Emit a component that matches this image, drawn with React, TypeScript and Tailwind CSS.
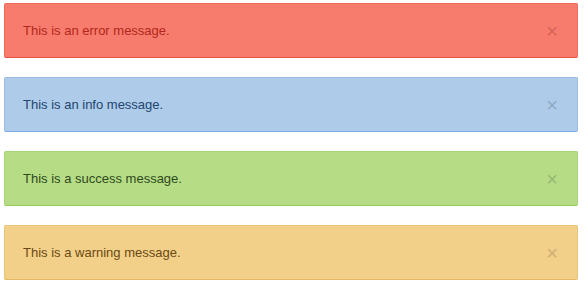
import React from 'react';

type Kind = 'error' | 'info' | 'success' | 'warning';

const styles: Record<Kind, { box: string; text: string; close: string }> = {
  error: {
    box: 'bg-[#f77c6d] border-[#ee6a5b] border-b-[#e9503f]',
    text: 'text-[#b2281b]',
    close: 'text-[#d7645a]',
  },
  info: {
    box: 'bg-[#aecbea] border-[#9bbde3] border-b-[#7eaade]',
    text: 'text-[#23466e]',
    close: 'text-[#8fa9c4]',
  },
  success: {
    box: 'bg-[#b6dd86] border-[#a6d477] border-b-[#93c95f]',
    text: 'text-[#2f4a1c]',
    close: 'text-[#97b872]',
  },
  warning: {
    box: 'bg-[#f3d089] border-[#eac47a] border-b-[#e4b866]',
    text: 'text-[#6a4a14]',
    close: 'text-[#cdaf76]',
  },
};

const messages: { kind: Kind; text: string }[] = [
  { kind: 'error', text: 'This is an error message.' },
  { kind: 'info', text: 'This is an info message.' },
  { kind: 'success', text: 'This is a success message.' },
  { kind: 'warning', text: 'This is a warning message.' },
];

const Alert = ({ kind, text }: { kind: Kind; text: string }) => {
  const s = styles[kind];
  return (
    <div className={`flex h-[55px] items-center justify-between rounded-[2px] border pl-[18px] pr-[19px] ${s.box}`}>
      <span className={`text-[13px] ${s.text}`}>{text}</span>
      <span className={`text-[20px] leading-none ${s.close}`}>×</span>
    </div>
  );
};

export default function App() {
  return (
    <div
      className="flex w-[588px] flex-col gap-[19px] bg-white pl-[4px] pr-[10px] pt-[3px]"
      style={{ fontFamily: '"Liberation Sans", Arial, sans-serif' }}
    >
      {messages.map((m) => (
        <Alert key={m.kind} kind={m.kind} text={m.text} />
      ))}
    </div>
  );
}
